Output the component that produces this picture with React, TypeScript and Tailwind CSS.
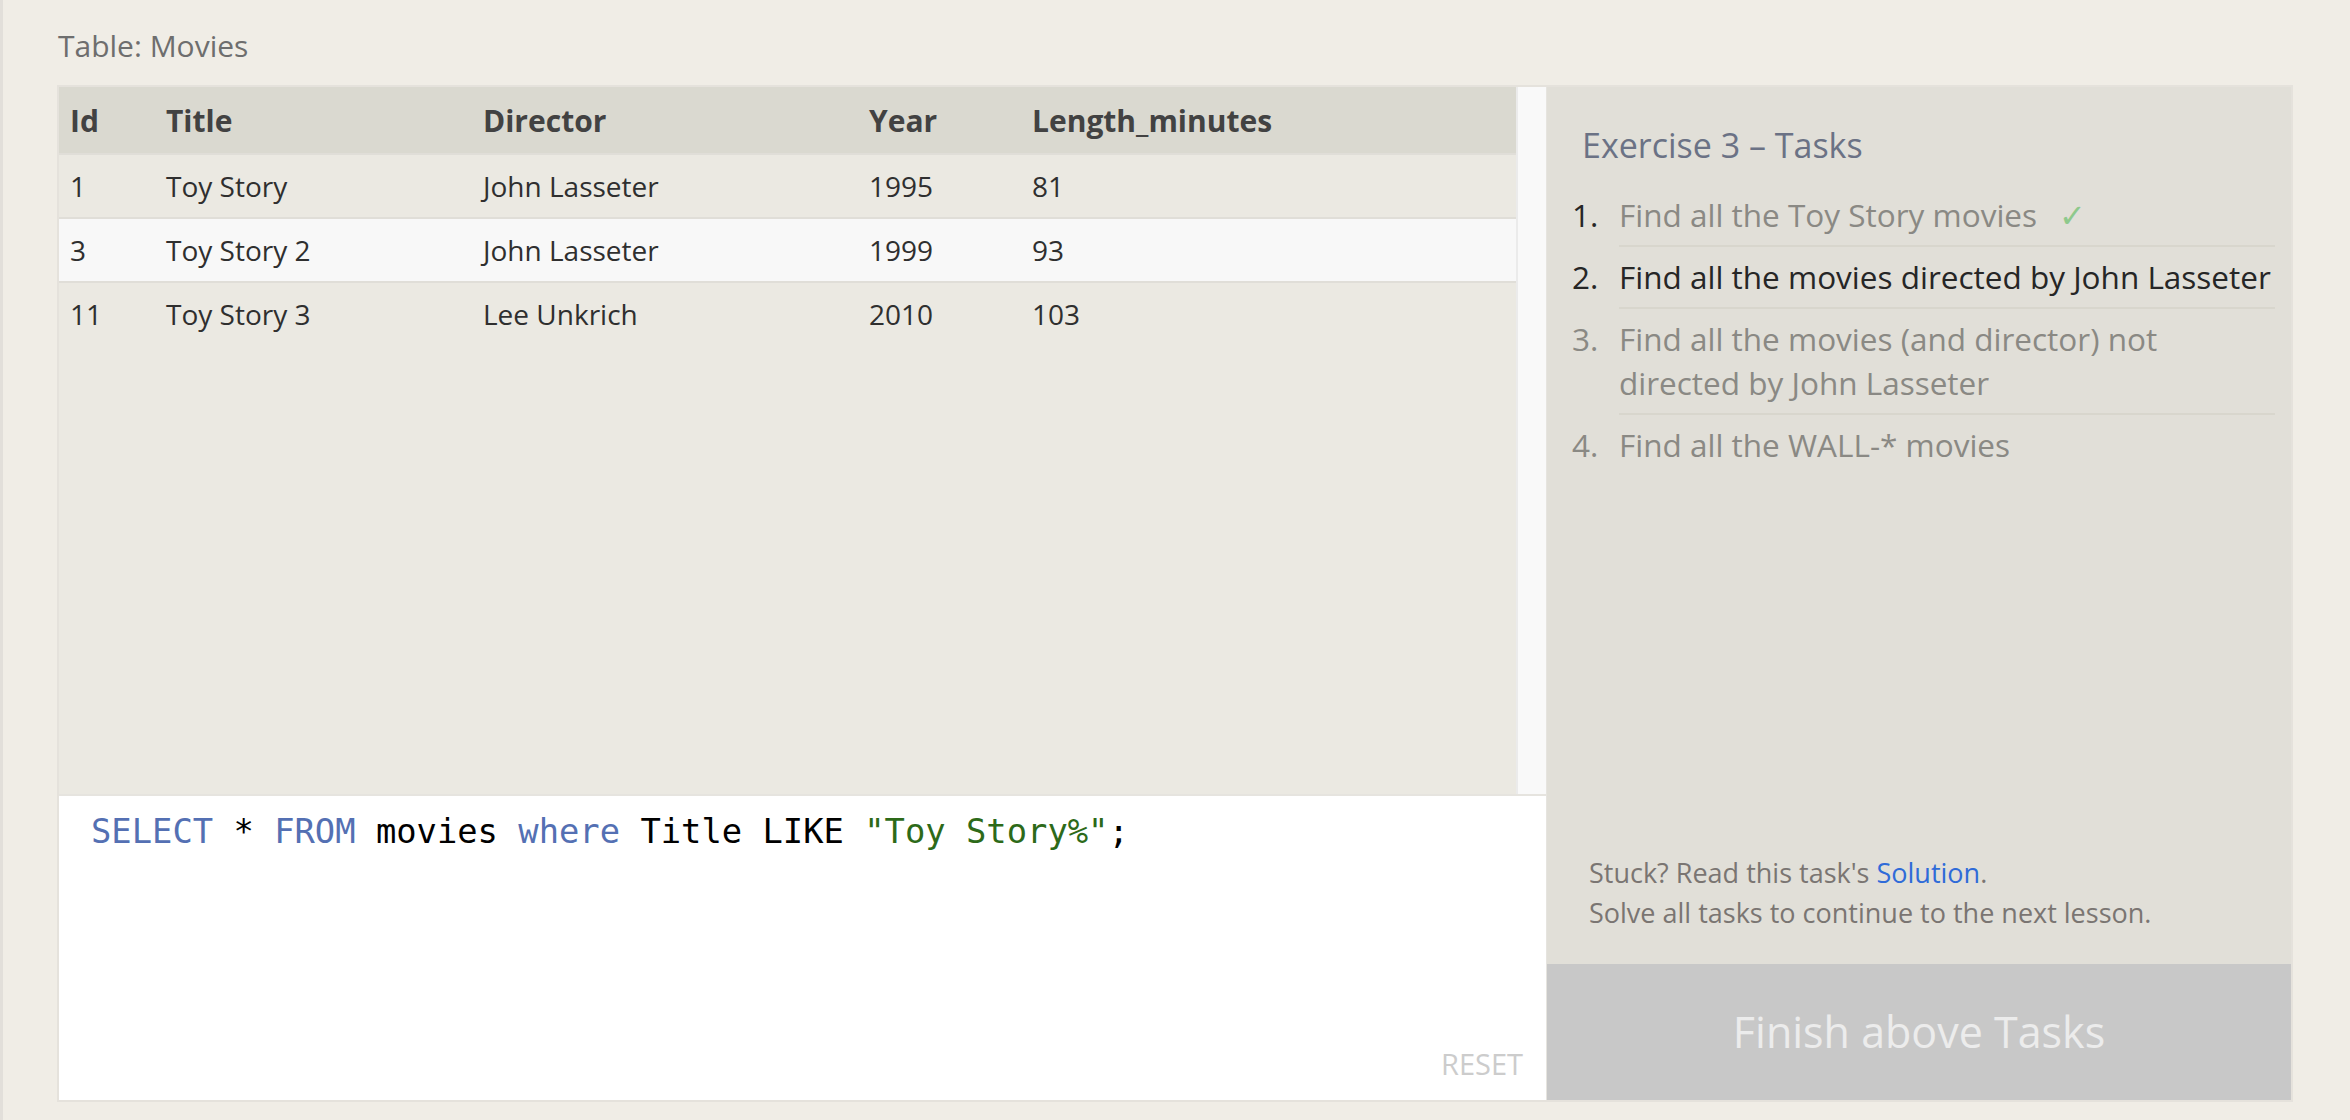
const rows = [
  { id: "1", title: "Toy Story", director: "John Lasseter", year: "1995", length: "81" },
  { id: "3", title: "Toy Story 2", director: "John Lasseter", year: "1999", length: "93" },
  { id: "11", title: "Toy Story 3", director: "Lee Unkrich", year: "2010", length: "103" },
];

const tasks = [
  { n: "1.", text: "Find all the Toy Story movies", state: "done" },
  { n: "2.", text: "Find all the movies directed by John Lasseter", state: "current" },
  { n: "3.", text: "Find all the movies (and director) not directed by John Lasseter", state: "todo" },
  { n: "4.", text: "Find all the WALL-* movies", state: "todo" },
];

const cols = "grid grid-cols-[96px_317px_386px_163px_1fr]";

function MoviesTable() {
  return (
    <div className="flex-1 bg-[#ebe9e2]">
      <div className={`${cols} h-[66px] items-center bg-[#dad9d0] text-[30px] font-bold text-[#424242]`}>
        <div className="pl-[11px]">Id</div>
        <div className="pl-[11px]">Title</div>
        <div className="pl-[11px]">Director</div>
        <div className="pl-[11px]">Year</div>
        <div className="pl-[11px]">Length_minutes</div>
      </div>
      {rows.map((r, i) => (
        <div
          key={r.id}
          className={`${cols} h-[64px] items-center border-t-2 border-[#e0ded8] text-[28px] text-[#2f2f2f] ${
            i === 1 ? "bg-[#f8f8f8]" : "bg-[#ebe9e2]"
          }`}
        >
          <div className="pl-[11px]">{r.id}</div>
          <div className="pl-[11px]">{r.title}</div>
          <div className="pl-[11px]">{r.director}</div>
          <div className="pl-[11px]">{r.year}</div>
          <div className="pl-[11px]">{r.length}</div>
        </div>
      ))}
    </div>
  );
}

function Editor() {
  return (
    <div className="flex h-[304px] flex-col bg-white pl-[32px] pr-[23px] pt-[12px] pb-[18px]">
      <div className="font-['DejaVu_Sans_Mono',monospace] text-[33.8px] leading-[48px] text-black whitespace-pre">
        <span className="text-[#5470b3]">SELECT</span> * <span className="text-[#5470b3]">FROM</span> movies{" "}
        <span className="text-[#5470b3]">where</span> Title LIKE{" "}
        <span className="text-[#2d6a19]">"Toy Story%"</span>;
      </div>
      <div className="mt-auto self-end text-[29px] leading-[36px] text-[#cccccc]">RESET</div>
    </div>
  );
}

function TaskPanel() {
  return (
    <div className="flex w-[744px] flex-col bg-[#e1dfd8]">
      <h2 className="pl-[35px] pt-[38px] text-[34px] leading-[40px] text-[#6b7285]">Exercise 3 – Tasks</h2>
      <ol className="mt-[20px] pl-[25px] pr-[16px] text-[31.5px]">
        {tasks.map((t, i) => (
          <li key={t.n} className="flex">
            <span
              className={`w-[47px] shrink-0 pt-[8px] leading-[44px] ${
                t.state === "todo" ? "text-[#8a8984]" : "text-[#262626]"
              }`}
            >
              {t.n}
            </span>
            <div
              className={`flex-1 py-[8px] leading-[44px] ${
                i < tasks.length - 1 ? "border-b-2 border-[#d8d6cd]" : ""
              } ${t.state === "current" ? "text-[#262626]" : "text-[#8a8984]"}`}
            >
              {t.text}
              {t.state === "done" && <span className="ml-[22px] text-[#8ec98c]">✓</span>}
            </div>
          </li>
        ))}
      </ol>
      <div className="mt-auto pl-[42px] pb-[31px] text-[27px] leading-[40px] text-[#7a7572]">
        <p>
          Stuck? Read this task's <span className="text-[#2f6bd8]">Solution</span>.
        </p>
        <p>Solve all tasks to continue to the next lesson.</p>
      </div>
      <div className="flex h-[136px] items-center justify-center bg-[#c8c8c8] text-[43px] text-[#ececec]">
        Finish above Tasks
      </div>
    </div>
  );
}

export default function App() {
  return (
    <div className="h-[1120px] w-[2350px] overflow-hidden border-l-[3px] border-[#e2dfda] bg-[#f0ede6] font-['Open_Sans',sans-serif]">
      <div className="h-[85px] pl-[55px] pt-[29px] text-[30px] leading-[34px] text-[#6e6e6e]">Table: Movies</div>
      <div className="ml-[54px] flex h-[1017px] w-[2236px] border-2 border-[#e5e2dc]">
        <div className="flex w-[1487px] flex-col">
          <div className="flex h-[707px]">
            <MoviesTable />
            <div className="w-[30px] border-l-2 border-[#ebebeb] bg-[#f9f9f9]" />
          </div>
          <div className="h-[2px] bg-[#e6e4df]" />
          <Editor />
        </div>
        <div className="w-[1px] bg-[#e6e4df]" />
        <TaskPanel />
      </div>
    </div>
  );
}
